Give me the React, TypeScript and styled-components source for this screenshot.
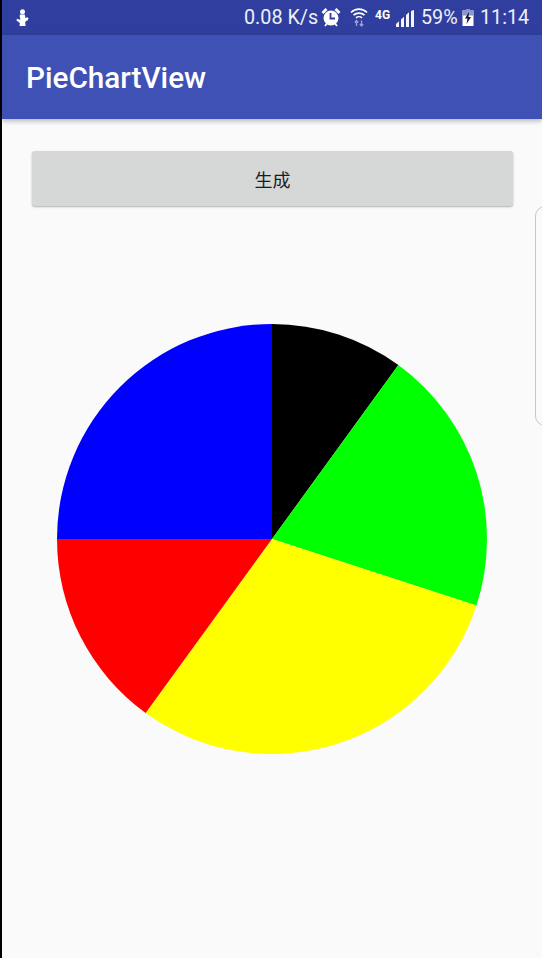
import React from "react";
import styled, { createGlobalStyle } from "styled-components";

const Global = createGlobalStyle`
  html, body { margin: 0; padding: 0; background: #000; }
  #root { width: 542px; height: 958px; overflow: hidden; }
`;

const Screen = styled.div`
  position: relative;
  width: 542px;
  height: 958px;
  display: flex;
  background: #000;
  overflow: hidden;
`;

const LeftEdge = styled.div`
  width: 2px;
  flex: none;
  background: #000;
`;

const Main = styled.div`
  flex: 1;
  min-width: 0;
  display: flex;
  flex-direction: column;
  background: #fafafa;
`;

const StatusBar = styled.div`
  height: 35px;
  flex: none;
  display: flex;
  align-items: center;
  padding: 0 10px 0 14px;
  background: #303f9f;
  color: #fff;
  font-family: Roboto, "Liberation Sans", sans-serif;
`;

const StatusText = styled.span<{ $w: number; $ml?: number }>`
  flex: none;
  width: ${(p) => p.$w}px;
  margin-left: ${(p) => p.$ml ?? 0}px;
  font-size: 21px;
  line-height: 35px;
  white-space: nowrap;
  color: #eef0f8;
  transform-origin: left center;
  transform: scaleX(0.94);
`;

const NetworkType = styled.span`
  flex: none;
  width: 15px;
  margin: -6px 0 0 7px;
  font-size: 12px;
  font-weight: 700;
  line-height: 12px;
  letter-spacing: 0.2px;
  white-space: nowrap;
  color: #fff;
`;

const Spacer = styled.div`
  flex: 1;
`;

const StatusIcon = styled.svg<{ $ml?: number; $mt?: number }>`
  flex: none;
  display: block;
  margin-left: ${(p) => p.$ml ?? 0}px;
  margin-top: ${(p) => p.$mt ?? 0}px;
`;

const Toolbar = styled.header`
  height: 84px;
  flex: none;
  display: flex;
  align-items: center;
  padding: 1px 0 0 24px;
  box-sizing: border-box;
  background: #3f51b5;
  box-shadow: 0 2px 5px rgba(0, 0, 0, 0.28);
  position: relative;
  z-index: 1;
`;

const Title = styled.h1`
  margin: 0;
  font-family: Roboto, "Liberation Sans", sans-serif;
  font-size: 29.7px;
  font-weight: 500;
  color: #fff;
`;

const Content = styled.main`
  flex: 1;
  display: flex;
  flex-direction: column;
  align-items: flex-start;
  padding: 32px 0 0 30px;
`;

const GenerateButton = styled.button`
  width: 481px;
  height: 55px;
  border: 0;
  border-radius: 3px;
  background: #d6d7d7;
  box-shadow: 0 1px 2px rgba(0, 0, 0, 0.3);
  font-family: Roboto, "Noto Sans CJK SC", sans-serif;
  font-size: 18px;
  color: #1c1c1c;
  padding: 0;
`;

const Pie = styled.svg`
  display: block;
  margin: 118px 0 0 25px;
`;

const SideHandle = styled.div`
  position: absolute;
  left: 535px;
  top: 206px;
  width: 30px;
  height: 220px;
  box-sizing: border-box;
  border: 1.5px solid #c8c8c8;
  border-radius: 10px;
  z-index: 2;
`;

const slices = [
  { pct: 10, color: "#000000" },
  { pct: 20, color: "#00ff00" },
  { pct: 30, color: "#ffff00" },
  { pct: 15, color: "#ff0000" },
  { pct: 25, color: "#0000ff" },
];

function slicePath(startPct: number, pct: number): string {
  const r = 215;
  const c = 215;
  const a0 = (startPct / 100) * 2 * Math.PI;
  const a1 = ((startPct + pct) / 100) * 2 * Math.PI;
  const x0 = c + r * Math.sin(a0);
  const y0 = c - r * Math.cos(a0);
  const x1 = c + r * Math.sin(a1);
  const y1 = c - r * Math.cos(a1);
  return `M${c} ${c}L${x0} ${y0}A${r} ${r} 0 ${pct > 50 ? 1 : 0} 1 ${x1} ${y1}Z`;
}

function PieChart() {
  let acc = 0;
  return (
    <Pie width={430} height={430} viewBox="0 0 430 430">
      {slices.map((s) => {
        const d = slicePath(acc, s.pct);
        acc += s.pct;
        return <path key={s.color} d={d} fill={s.color} />;
      })}
    </Pie>
  );
}

export default function App() {
  return (
    <Screen>
      <Global />
      <LeftEdge />
      <Main>
        <StatusBar>
          <StatusIcon width={13} height={18} viewBox="0 0 13 18" fill="#fff" $mt={1}>
            <circle cx="6.500" cy="2.700" r="2.500" />
            <path d="M4 5.500h4.500c.7 1 .9 2.300.8 3.700l1.700-1 1.500.8-.7 2.200-1.300.6-1.300 1.200L9.500 17H3.500l.4-3L.5 11.500l.4-1.700 3.100 1c.5-.4.300-.8.100-1.500-.4-1.300-.5-2.700-.1-3.800z" />
          </StatusIcon>
          <Spacer />
          <StatusText $w={77} $ml={2}>0.08 K/s</StatusText>
          <StatusIcon width={20} height={20} viewBox="0 0 20 20" $mt={-1}>
            <circle cx="10" cy="11" r="7.500" fill="#fff" />
            <path d="M1.500 6l4-4M18.500 6l-4-4" stroke="#fff" strokeWidth="2.800" />
            <path d="M4 19l2-2.500M16 19l-2-2.500" stroke="#fff" strokeWidth="1.800" />
            <path d="M9.500 6v5.500h4.500" stroke="#303f9f" strokeWidth="1.800" fill="none" />
          </StatusIcon>
          <StatusIcon width={18} height={19} viewBox="0 0 18 19" $ml={9} $mt={-1} fill="none" stroke="#fff">
            <path d="M1 4.500c4.500-4.400 11.500-4.400 16 0" strokeWidth="1.700" />
            <path d="M3.500 7.200c3-2.900 8-2.900 11 0" strokeWidth="1.700" />
            <path d="M6 9.800c1.600-1.400 4.400-1.400 6 0" strokeWidth="1.700" />
            <path d="M6.500 18v-5.500M4.800 14.500l1.700-2 1.700 2M11.500 12.500V18M9.800 16l1.700 2 1.700-2" strokeWidth="1.300" stroke="#9aa2d2" />
          </StatusIcon>
          <NetworkType>4G</NetworkType>
          <StatusIcon width={18} height={17} viewBox="0 0 18 17" $ml={6} $mt={1} fill="#f4f5fa">
            <path d="M0 17v-3l3-2.700V17zM5 17V9.500l3-2.700V17zM10 17V5l3-2.700V17zM15 17V1l3-1v17z" />
          </StatusIcon>
          <StatusText $w={39} $ml={7}>59%</StatusText>
          <StatusIcon width={12} height={17} viewBox="0 0 12 17" $ml={2}>
            <path d="M4 0h4v1.500h3.500V17H.5V1.500H4z" fill="#fff" />
            <path d="M.5 1.500h11v5H.5zM4 0h4v1.500H4z" fill="#8d96c9" />
            <path d="M7 3L3 9.500h2.500L4.500 15 9 8H6.500z" fill="#101428" />
          </StatusIcon>
          <StatusText $w={52} $ml={6}>11:14</StatusText>
        </StatusBar>
        <Toolbar>
          <Title>PieChartView</Title>
        </Toolbar>
        <Content>
          <GenerateButton>生成</GenerateButton>
          <PieChart />
        </Content>
      </Main>
      <SideHandle />
    </Screen>
  );
}
